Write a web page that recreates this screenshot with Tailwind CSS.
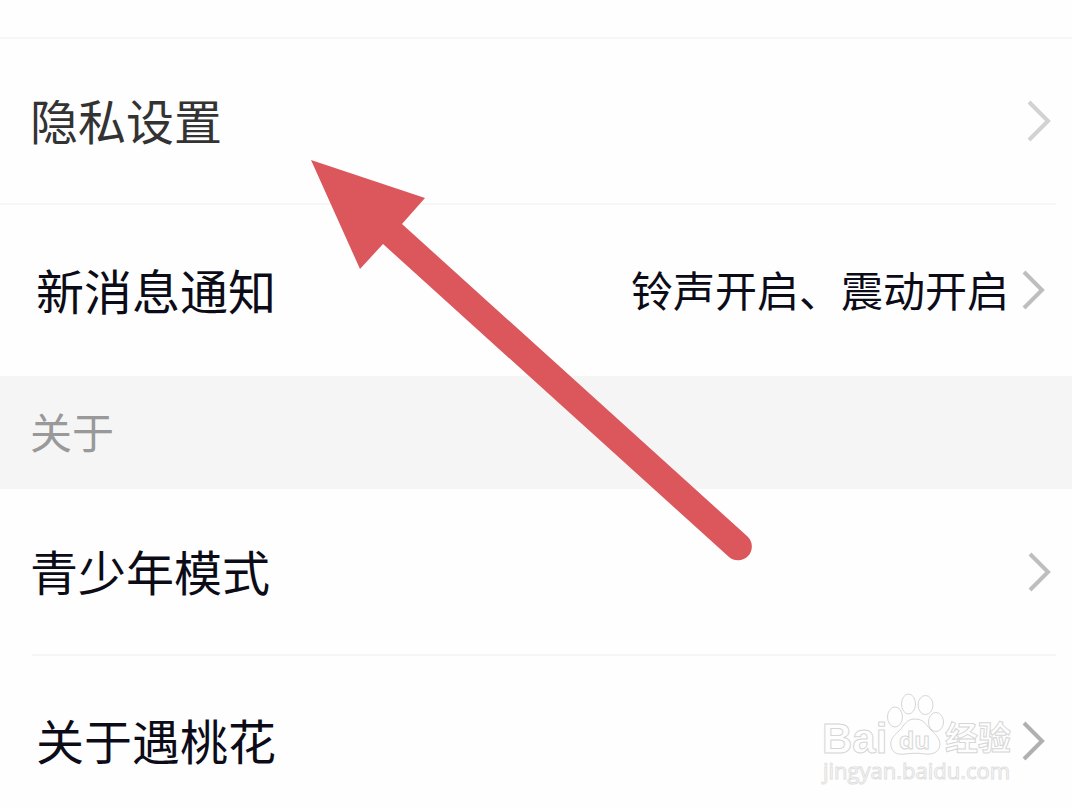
<!DOCTYPE html>
<html lang="zh-CN">
<head>
    <meta charset="UTF-8">
    <meta name="viewport" content="width=device-width, initial-scale=1.0">
    <title>设置</title>
    <script src="https://cdn.jsdelivr.net/npm/@tailwindcss/browser@4"></script>
</head>
<body class="relative min-h-screen overflow-hidden bg-[#fefefe] font-['Noto_Sans_CJK_SC',sans-serif] text-[48px] leading-[72px] text-[#0c0c18]">
    <main class="pt-[37px]">
        <nav class="border-t-2 border-[#f6f6f6]">
            <a href="#privacy" class="flex h-[164px] items-center justify-between pl-[30px] pr-[21px] text-[#333333]">
                <span class="pb-1">隐私设置</span>
                <svg class="h-11 w-6 text-[#d2d2d2]" viewBox="0 0 24 44" fill="none" stroke="currentColor" stroke-width="4"><path d="M2 3 21 22 2 41"/></svg>
            </a>
            <div class="mr-4 border-t-2 border-[#f6f6f6]"></div>
            <a href="#notifications" class="flex h-[171px] items-center justify-between pl-[36px] pr-[27px]">
                <span class="pb-1">新消息通知</span>
                <span class="flex items-center gap-3">
                    <span class="pb-1 text-[42px]">铃声开启、震动开启</span>
                    <svg class="h-11 w-6 text-[#bebebe]" viewBox="0 0 24 44" fill="none" stroke="currentColor" stroke-width="4"><path d="M3 3 21 21 3 39"/></svg>
                </span>
            </a>
        </nav>

        <h2 class="flex h-[113px] items-center bg-[#f5f5f5] pl-[30px] text-[42px] text-[#999999]"><span class="pb-1">关于</span></h2>

        <nav>
            <a href="#youth" class="flex h-[165px] items-center justify-between pl-[30px] pr-[21px]">
                <span class="pb-1">青少年模式</span>
                <svg class="h-11 w-6 text-[#bebebe]" viewBox="0 0 24 44" fill="none" stroke="currentColor" stroke-width="4"><path d="M3 4 21 22 3 40"/></svg>
            </a>
            <div class="ml-8 mr-4 border-t-2 border-[#f6f6f6]"></div>
            <a href="#about" class="flex h-[169px] items-center justify-between pl-[36px] pr-[27px]">
                <span class="pb-1">关于遇桃花</span>
                <svg class="h-11 w-6 text-[#b0b0b0]" viewBox="0 0 24 44" fill="none" stroke="currentColor" stroke-width="4"><path d="M3 4 21 22 3 40"/></svg>
            </a>
        </nav>
    </main>

    <!-- watermark -->
    <svg class="absolute right-[52px] top-[688px] h-[100px] w-[200px]" viewBox="0 0 200 100" fill="#fefefe" stroke="#d6d6d6" stroke-width="1" role="img" aria-label="Baidu经验">
        <text x="2" y="65" class="font-['Liberation_Sans'] text-[42px] font-bold">Bai</text>
        <ellipse cx="75" cy="29" rx="7.500" ry="10"/>
        <ellipse cx="88.500" cy="16" rx="7" ry="10"/>
        <ellipse cx="105.500" cy="17" rx="7.500" ry="9.500"/>
        <ellipse cx="116" cy="34" rx="7.500" ry="9.500"/>
        <path d="M95 31C86 31 84 38 79 43C73 48 70 52 71 58C72 65 78 67 85 66C92 65 98 65 105 66C113 67 119 64 120 57C120 50 115 46 111 42C106 37 104 31 95 31Z"/>
        <text x="79" y="61" class="font-['Open_Sans'] text-[24px] font-bold">du</text>
        <text x="125" y="62" class="font-['Noto_Sans_CJK_SC'] text-[33px] font-bold">经验</text>
        <text x="3" y="91" stroke="#e0e0e0" class="font-['Open_Sans'] text-[22px]">jingyan.baidu.com</text>
    </svg>

    <!-- pointer arrow -->
    <svg class="pointer-events-none absolute left-[311px] top-[160px] h-[402px] w-[442px]" viewBox="0 0 442 402" fill="#dc575c" aria-hidden="true">
        <path d="M0 0 114 38 91 64 436 376A13.500 13.500 0 0 1 418 397L72 84 49 109Z"/>
    </svg>
</body>
</html>
